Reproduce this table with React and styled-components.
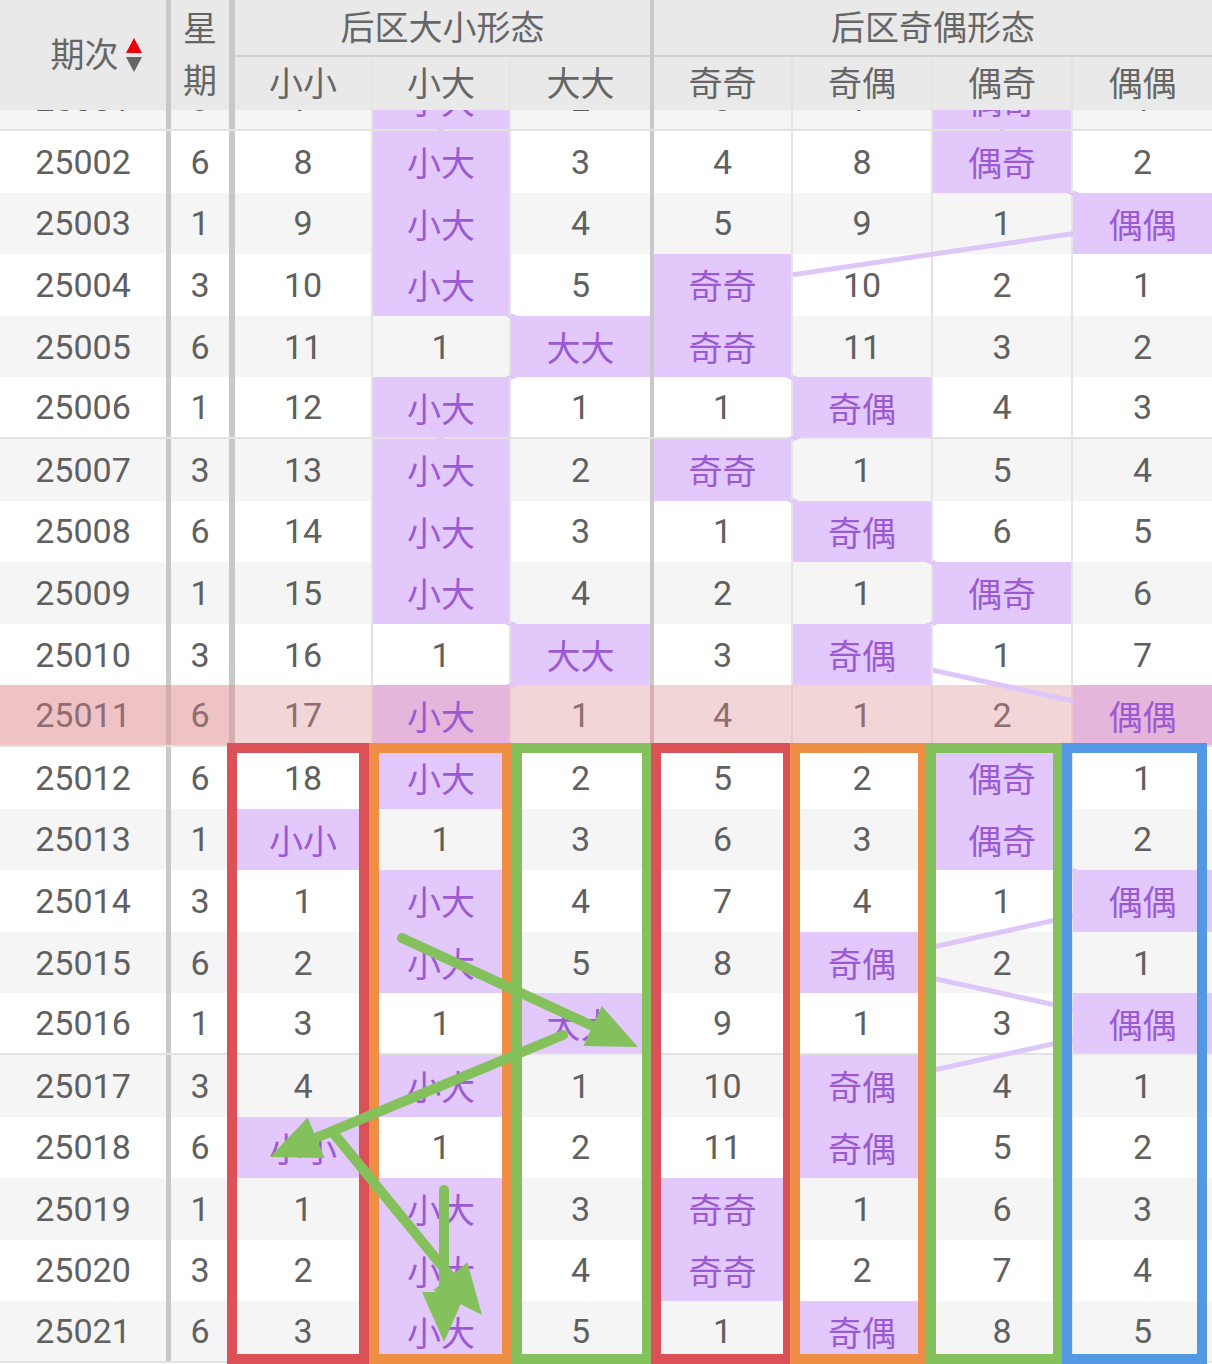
import styled, { createGlobalStyle } from 'styled-components'

const COLS = '171px 64px 138px 138px 143px 139px 140px 140px 139px'
const ROW_H = 61.6
const FIRST_OFFSET = -40.6

const EDGES = ['thick5', 'thick6', 'thin', 'thin', 'thick4', 'thin', 'thin', 'thin', 'none']
const CENTERS = [83, 200, 303, 441, 580.5, 722.5, 862, 1002, 1142.5]

const edgeStyle = (edge, hot) => {
  const thick = hot ? '#d3adb0' : '#c8c8c8'
  const thin = hot ? '#e9c7ca' : '#e4e4e4'
  switch (edge) {
    case 'thick5': return `5px solid ${thick}`
    case 'thick6': return `6px solid ${thick}`
    case 'thick4': return `4px solid ${thick}`
    case 'thin': return `2px solid ${thin}`
    default: return 'none'
  }
}

const rows = [
  ['25001', '3', '7', '小大', '2', '3', '7', '偶奇', '1'],
  ['25002', '6', '8', '小大', '3', '4', '8', '偶奇', '2'],
  ['25003', '1', '9', '小大', '4', '5', '9', '1', '偶偶'],
  ['25004', '3', '10', '小大', '5', '奇奇', '10', '2', '1'],
  ['25005', '6', '11', '1', '大大', '奇奇', '11', '3', '2'],
  ['25006', '1', '12', '小大', '1', '1', '奇偶', '4', '3'],
  ['25007', '3', '13', '小大', '2', '奇奇', '1', '5', '4'],
  ['25008', '6', '14', '小大', '3', '1', '奇偶', '6', '5'],
  ['25009', '1', '15', '小大', '4', '2', '1', '偶奇', '6'],
  ['25010', '3', '16', '1', '大大', '3', '奇偶', '1', '7'],
  ['25011', '6', '17', '小大', '1', '4', '1', '2', '偶偶'],
  ['25012', '6', '18', '小大', '2', '5', '2', '偶奇', '1'],
  ['25013', '1', '小小', '1', '3', '6', '3', '偶奇', '2'],
  ['25014', '3', '1', '小大', '4', '7', '4', '1', '偶偶'],
  ['25015', '6', '2', '小大', '5', '8', '奇偶', '2', '1'],
  ['25016', '1', '3', '1', '大大', '9', '1', '3', '偶偶'],
  ['25017', '3', '4', '小大', '1', '10', '奇偶', '4', '1'],
  ['25018', '6', '小小', '1', '2', '11', '奇偶', '5', '2'],
  ['25019', '1', '1', '小大', '3', '奇奇', '1', '6', '3'],
  ['25020', '3', '2', '小大', '4', '奇奇', '2', '7', '4'],
  ['25021', '6', '3', '小大', '5', '1', '奇偶', '8', '5'],
]

const isHit = (v, i) => i >= 2 && isNaN(Number(v))

const GlobalStyle = createGlobalStyle`
  html, body { margin: 0; padding: 0; background: #fff; }
  body { font-family: Roboto, "Noto Sans CJK SC", sans-serif; }
`

const Page = styled.div`
  width: 1212px;
  height: 1364px;
  overflow: hidden;
  background: #fff;
`

const Header = styled.div`
  position: relative;
  z-index: 5;
  display: grid;
  grid-template-columns: ${COLS};
  grid-template-rows: 57px 53px;
  background: #e9e9e9;
  color: #666;
  font-size: 34px;
`

const HeadCell = styled.div`
  grid-column: ${p => p.$col};
  grid-row: ${p => p.$row};
  display: flex;
  align-items: center;
  justify-content: center;
  text-align: center;
  border-right: ${p => edgeStyle(p.$edge)};
  border-bottom: ${p => (p.$underline ? '2px solid #d2d2d2' : 'none')};
  padding-left: ${p => p.$pad || 0}px;
  line-height: 52px;
  box-sizing: border-box;
`

const Stack = styled.span`
  display: block;
  width: 40px;
  word-break: break-all;
`

const SortIcon = styled.svg`
  margin-left: 7px;
  flex: none;
`

const Body = styled.div`
  position: relative;
  height: 1254px;
  overflow: hidden;
`

const Rows = styled.div`
  margin-top: ${FIRST_OFFSET}px;
`

const Row = styled.div`
  display: grid;
  grid-template-columns: ${COLS};
  height: ${ROW_H}px;
  box-sizing: border-box;
  background: ${p => (p.$gray ? '#f5f5f5' : '#fff')};
  border-bottom: ${p => (p.$divider ? '2px solid #e2e2e2' : 'none')};
`

const cellBg = p => {
  if (p.$hot && p.$hit) return '#e5b5db'
  if (p.$hit) return '#e2c8fb'
  if (p.$hot && p.$lead) return '#efc2c6'
  if (p.$hot) return '#f2d5d7'
  return 'transparent'
}

const Cell = styled.div`
  position: ${p => (p.$hit ? 'relative' : 'static')};
  z-index: ${p => (p.$hit ? 2 : 'auto')};
  display: flex;
  align-items: center;
  justify-content: center;
  font-size: 34px;
  color: ${p => (p.$hit ? '#9b5ad2' : p.$hot ? '#8f6d70' : '#606060')};
  background: ${cellBg};
  border-right: ${p => edgeStyle(p.$edge, p.$hot)};
  box-sizing: border-box;
`

const TrendLayer = styled.svg`
  position: absolute;
  left: 0;
  top: 0;
  z-index: 1;
  pointer-events: none;
`

const Frame = styled.div`
  position: absolute;
  z-index: 3;
  top: 633px;
  left: ${p => p.$left}px;
  width: ${p => p.$width}px;
  height: 621px;
  border: 10px solid ${p => p.$color};
  box-sizing: border-box;
  pointer-events: none;
`

const ArrowLayer = styled.svg`
  position: absolute;
  left: 0;
  top: 0;
  z-index: 4;
  pointer-events: none;
`

const RED = '#dc5157'
const ORANGE = '#ee8f45'
const GREEN = '#84c15c'
const BLUE = '#5298e5'

const frames = [
  { left: 227, width: 142, color: RED },
  { left: 369, width: 143, color: ORANGE },
  { left: 512, width: 140, color: GREEN },
  { left: 651, width: 142, color: RED },
  { left: 790, width: 138, color: ORANGE },
  { left: 926, width: 137, color: GREEN },
  { left: 1062, width: 145, color: BLUE },
]

const centerY = i => FIRST_OFFSET + i * ROW_H + ROW_H / 2

function trendSegments() {
  const groups = [[2, 3, 4], [5, 6, 7, 8]]
  const segs = []
  groups.forEach(g => {
    for (let i = 0; i < rows.length - 1; i++) {
      const a = g.find(c => isHit(rows[i][c], c))
      const b = g.find(c => isHit(rows[i + 1][c], c))
      if (a === undefined || b === undefined) continue
      segs.push([CENTERS[a], centerY(i), CENTERS[b], centerY(i + 1)])
    }
  })
  return segs
}

const arrows = [
  { from: [402, 828], tip: [638, 937] },
  { from: [563, 925], tip: [270, 1047] },
  { from: [335, 1025], tip: [482, 1205] },
  { from: [444, 1080], tip: [444, 1232] },
]

function Arrow({ from, tip }) {
  const dx = tip[0] - from[0]
  const dy = tip[1] - from[1]
  const len = Math.hypot(dx, dy)
  const ux = dx / len
  const uy = dy / len
  const head = 50
  const half = 22
  const bx = tip[0] - ux * head
  const by = tip[1] - uy * head
  const pts = [
    [tip[0], tip[1]],
    [bx - uy * half, by + ux * half],
    [bx + uy * half, by - ux * half],
  ]
  return (
    <g>
      <line x1={from[0]} y1={from[1]} x2={bx + ux * 6} y2={by + uy * 6}
        stroke={GREEN} strokeWidth="10" strokeLinecap="round" />
      <polygon points={pts.map(p => p.join(',')).join(' ')} fill={GREEN} />
    </g>
  )
}

export default function App() {
  const segs = trendSegments()
  return (
    <Page>
      <GlobalStyle />
      <Header>
        <HeadCell $col="1" $row="1 / 3" $edge="thick5" $pad={26}>
          期次
          <SortIcon width="16" height="34" viewBox="0 0 16 34">
            <polygon points="8,0 16,15 0,15" fill="#e8000b" />
            <polygon points="0,19 16,19 8,34" fill="#666" />
          </SortIcon>
        </HeadCell>
        <HeadCell $col="2" $row="1 / 3" $edge="thick6">
          <Stack>星期</Stack>
        </HeadCell>
        <HeadCell $col="3 / 6" $row="1" $edge="thick4" $underline>后区大小形态</HeadCell>
        <HeadCell $col="6 / 10" $row="1" $edge="none" $underline>后区奇偶形态</HeadCell>
        {['小小', '小大', '大大', '奇奇', '奇偶', '偶奇', '偶偶'].map((t, i) => (
          <HeadCell key={t} $col={String(i + 3)} $row="2" $edge={EDGES[i + 2]}>{t}</HeadCell>
        ))}
      </Header>
      <Body>
        <Rows>
          {rows.map(r => {
            const n = Number(r[0])
            const hot = r[0] === '25011'
            const last = r[0].slice(-1)
            return (
              <Row key={r[0]} $gray={n % 2 === 1} $divider={last === '1' || last === '6'}>
                {r.map((v, i) => (
                  <Cell key={i} $edge={EDGES[i]} $hit={isHit(v, i)} $hot={hot} $lead={i < 2}>
                    {v}
                  </Cell>
                ))}
              </Row>
            )
          })}
        </Rows>
        <TrendLayer width="1212" height="1254">
          {segs.map((s, i) => (
            <line key={i} x1={s[0]} y1={s[1]} x2={s[2]} y2={s[3]} stroke="#dfc6f8" strokeWidth="5" />
          ))}
        </TrendLayer>
        {frames.map((f, i) => (
          <Frame key={i} $left={f.left} $width={f.width} $color={f.color} />
        ))}
        <ArrowLayer width="1212" height="1254">
          {arrows.map((a, i) => <Arrow key={i} from={a.from} tip={a.tip} />)}
        </ArrowLayer>
      </Body>
    </Page>
  )
}
